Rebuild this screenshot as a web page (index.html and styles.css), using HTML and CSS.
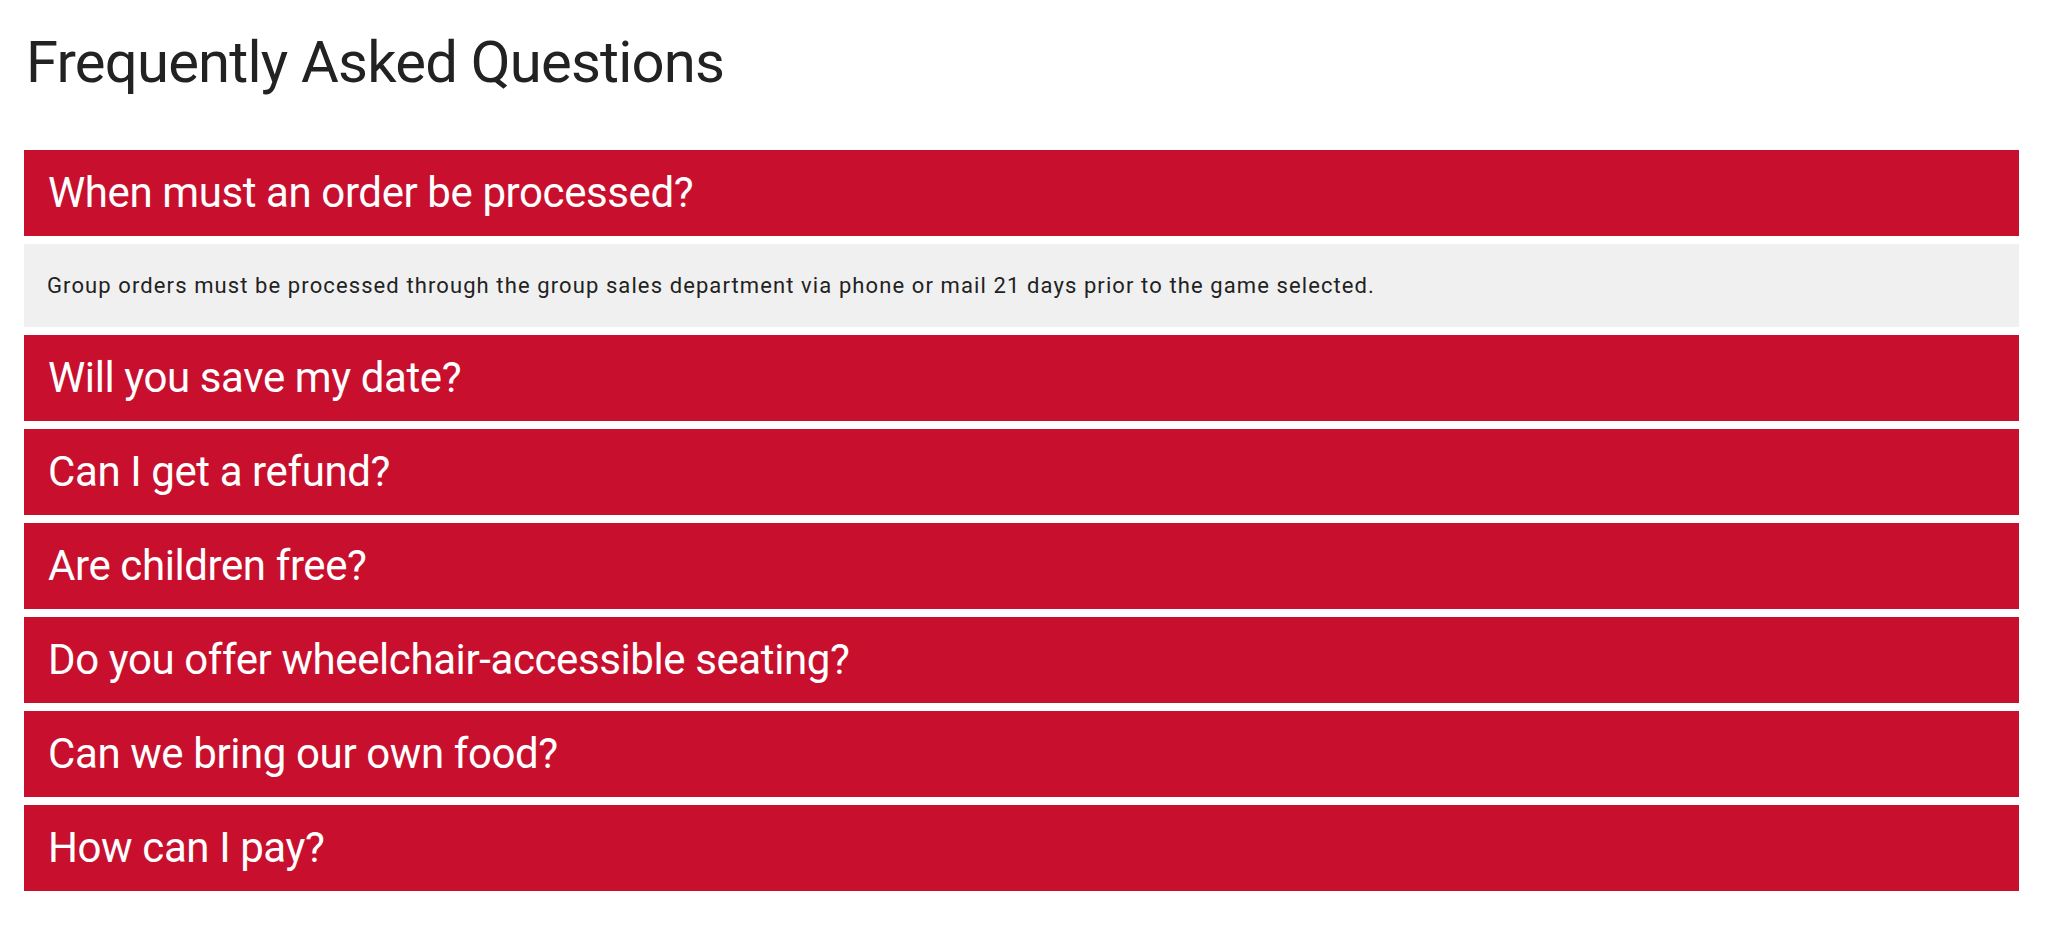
FILE: index.html
```html
<!DOCTYPE html>
<html lang="en">
<head>
<meta charset="utf-8">
<title>Frequently Asked Questions</title>
<link rel="stylesheet" href="styles.css">
</head>
<body>
<main class="page">
  <h1 class="title">Frequently Asked Questions</h1>
  <div class="faq">
    <div class="faq-item is-open">
      <div class="question">When must an order be processed?</div>
      <div class="answer">Group orders must be processed through the group sales department via phone or mail 21 days prior to the game selected.</div>
    </div>
    <div class="faq-item"><div class="question">Will you save my date?</div></div>
    <div class="faq-item"><div class="question">Can I get a refund?</div></div>
    <div class="faq-item"><div class="question">Are children free?</div></div>
    <div class="faq-item"><div class="question">Do you offer wheelchair-accessible seating?</div></div>
    <div class="faq-item"><div class="question">Can we bring our own food?</div></div>
    <div class="faq-item"><div class="question">How can I pay?</div></div>
  </div>
</main>
</body>
</html>
```

FILE: styles.css
```css
html, body {
  margin: 0;
  padding: 0;
  background: #ffffff;
}

body {
  font-family: Roboto, "Noto Sans", "Liberation Sans", sans-serif;
  color: #222222;
}

.page {
  padding: 0 36px 0 24px;
}

.title {
  margin: 27px 0 53px 0;
  padding-left: 2px;
  font-size: 58px;
  line-height: 70px;
  font-weight: 400;
  letter-spacing: -0.8px;
  color: #222222;
}

.faq {
  display: flex;
  flex-direction: column;
  gap: 8px;
}

.faq-item {
  display: flex;
  flex-direction: column;
  gap: 8px;
}

.question {
  height: 86px;
  display: flex;
  align-items: center;
  padding: 0 24px;
  background: #c8102e;
  color: #ffffff;
  font-size: 42px;
  line-height: 1;
  letter-spacing: -0.4px;
}

.answer {
  height: 83px;
  display: flex;
  align-items: center;
  padding: 0 23px;
  background: #f0f0f0;
  color: #222222;
  font-size: 22px;
  line-height: 1;
  letter-spacing: 1.1px;
}
```
